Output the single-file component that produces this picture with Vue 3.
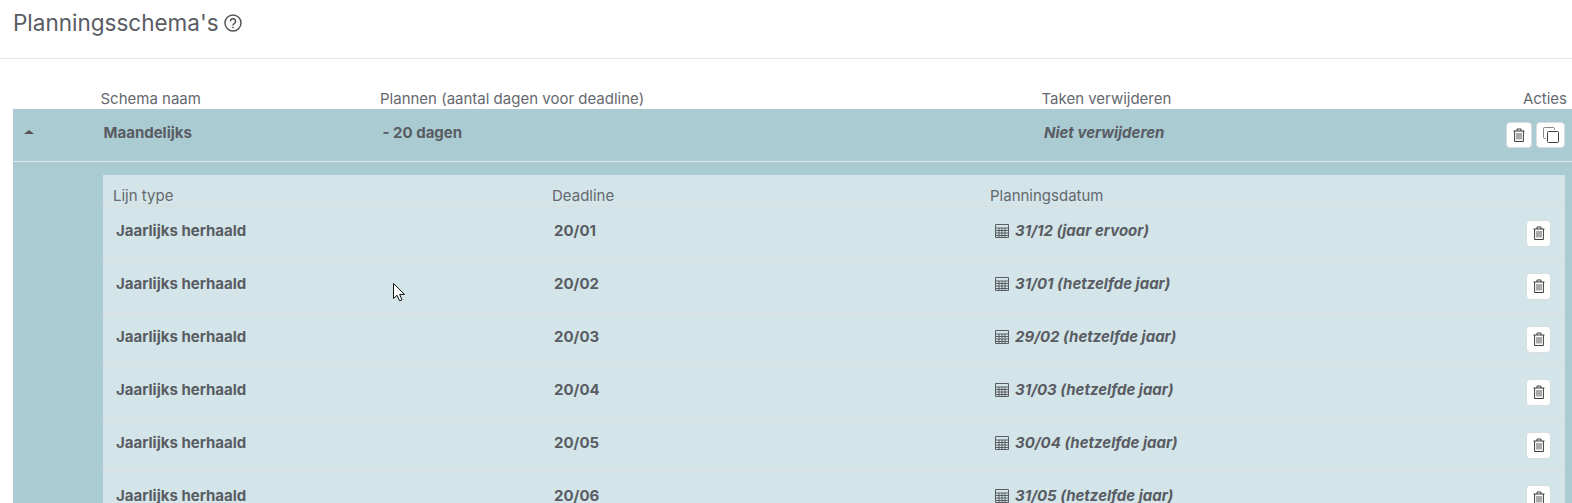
<script setup>
const lines = [
  { deadline: '20/01', date: '31/12 (jaar ervoor)' },
  { deadline: '20/02', date: '31/01 (hetzelfde jaar)' },
  { deadline: '20/03', date: '29/02 (hetzelfde jaar)' },
  { deadline: '20/04', date: '31/03 (hetzelfde jaar)' },
  { deadline: '20/05', date: '30/04 (hetzelfde jaar)' },
  { deadline: '20/06', date: '31/05 (hetzelfde jaar)' },
]
</script>

<template>
  <div class="page">
    <header class="top">
      <h1>Planningsschema's</h1>
      <svg class="help" viewBox="0 0 18 18" width="18" height="18" fill="none" stroke="currentColor">
        <circle cx="9" cy="9" r="8" stroke-width="1.5" />
        <path d="M6.400 7.200a2.600 2.600 0 1 1 4 2.200c-1 .6-1.400 1-1.400 2" stroke-width="1.600" />
        <circle cx="9" cy="13.500" r=".6" fill="currentColor" stroke-width=".7" />
      </svg>
    </header>

    <section class="schemas">
      <div class="cols">
        <span />
        <span>Schema naam</span>
        <span>Plannen (aantal dagen voor deadline)</span>
        <span>Taken verwijderen</span>
        <span>Acties</span>
      </div>

      <div class="schema">
        <div class="main">
          <span class="toggle"><i class="caret" /></span>
          <b>Maandelijks</b>
          <b>- 20 dagen</b>
          <b class="remove">Niet verwijderen</b>
          <div class="actions">
            <button class="btn">
              <svg viewBox="0 0 12 14" width="12" height="14" fill="none" stroke="currentColor">
                <path d="M.5 3h11M4 3V1h4v2M1.600 3v10.500h8.800V3" />
                <path d="M4 5v6.500M6 5v6.500M8 5v6.500" stroke="#555" />
              </svg>
            </button>
            <button class="btn wide">
              <svg viewBox="0 0 16 16" width="16" height="16" fill="none" stroke="currentColor">
                <path d="M3 11.500H1.500A1 1 0 0 1 .5 10.500V1.500a1 1 0 0 1 1-1h9a1 1 0 0 1 1 1V3" stroke="#8a8a8a" />
                <rect x="4.500" y="4.500" width="11" height="11" rx="1" />
              </svg>
            </button>
          </div>
        </div>

        <div class="panel">
          <div class="line head">
            <span>Lijn type</span>
            <span>Deadline</span>
            <span>Planningsdatum</span>
          </div>
          <div v-for="l in lines" :key="l.deadline" class="line row">
            <b>Jaarlijks herhaald</b>
            <b>{{ l.deadline }}</b>
            <b class="date">
              <svg viewBox="0 0 14 14" width="14" height="14" fill="none" stroke="currentColor">
                <path d="M.5.5h13v13H.5zM.5 4h13M.5 6.500h13M.5 9h13M.5 11.500h13M4 4v9.500M7 4v9.500M10 4v9.500" />
              </svg>
              <em>{{ l.date }}</em>
            </b>
            <button class="btn tall">
              <svg viewBox="0 0 12 14" width="12" height="14" fill="none" stroke="currentColor">
                <path d="M.5 3h11M4 3V1h4v2M1.600 3v10.500h8.800V3" />
                <path d="M4 5v6.500M6 5v6.500M8 5v6.500" stroke="#555" />
              </svg>
            </button>
          </div>
        </div>
      </div>
    </section>

    <!-- muiscursor uit de schermafbeelding -->
    <svg class="cursor" viewBox="0 0 13 20" width="13" height="20">
      <path d="M.5.5v15l3.600-3.200 2.400 5.500 2.500-1-2.400-5.400h4.900z" fill="#fff" stroke="#111" />
    </svg>
  </div>
</template>

<style>
html, body {
  margin: 0;
  background: #fff;
}
</style>

<style scoped>
.page {
  position: relative;
  height: 503px;
  overflow: hidden;
  font-family: Inter, "Liberation Sans", sans-serif;
  font-size: 15px;
  color: #595c63;
  background: #fff;
}

.top {
  display: flex;
  align-items: center;
  gap: 5px;
  height: 59px;
  padding: 0 0 13px 13px;
  box-sizing: border-box;
  border-bottom: 1px solid #e4e6e8;
}

h1 {
  margin: 0;
  font-size: 22.5px;
  font-weight: 400;
}

.help {
  color: #555;
}

.schemas {
  padding: 30px 0 0 13px;
}

.cols {
  display: grid;
  grid-template-columns: 87.5px 279.5px 661.5px 1fr auto;
  height: 20px;
  box-sizing: border-box;
  align-items: center;
  padding: 0 5px 2px 0;
  color: #65686e;
}

.schema {
  background: #aacbd2;
}

.main {
  display: grid;
  grid-template-columns: 90.500px 279px 661.500px 1fr auto;
  align-items: center;
  height: 53px;
  box-sizing: border-box;
  border-bottom: 1px solid #dbe8eb;
  padding-right: 7px;
}

.main b {
  padding-bottom: 6px;
  font-weight: 650;
}

.toggle {
  padding: 0 0 6px 11px;
}

.caret {
  display: block;
  width: 0;
  border: 5px solid transparent;
  border-top: 0;
  border-bottom: 4px solid #555;
}

.main .remove {
  font-style: italic;
}

.actions {
  display: flex;
  gap: 4px;
}

.btn {
  display: flex;
  align-items: center;
  justify-content: center;
  width: 26px;
  height: 26px;
  padding: 0;
  border: 1px solid #d8dde0;
  border-radius: 4px;
  background: #fff;
  color: #3c3c3c;
}

.wide {
  width: 29px;
}

.tall {
  width: 25px;
  height: 27px;
}

.panel {
  margin: 13px 7px 0 90px;
  background: #d3e5e9;
}

.line {
  display: grid;
  align-items: center;
  box-sizing: border-box;
  border-bottom: 1px solid #d9dede;
}

.head {
  grid-template-columns: 439px 438px 1fr;
  height: 32px;
  padding: 10px 0 0 10px;
  color: #65686e;
}

.row {
  grid-template-columns: 438px 441px 1fr 25px;
  height: 53px;
  padding: 0 14px 0 13px;
}

.row > b {
  padding-bottom: 6px;
  font-weight: 650;
}

.date {
  display: flex;
  align-items: center;
  gap: 6px;
}

.date svg {
  margin-top: 2px;
}

.cursor {
  position: absolute;
  left: 393px;
  top: 283px;
}
</style>
